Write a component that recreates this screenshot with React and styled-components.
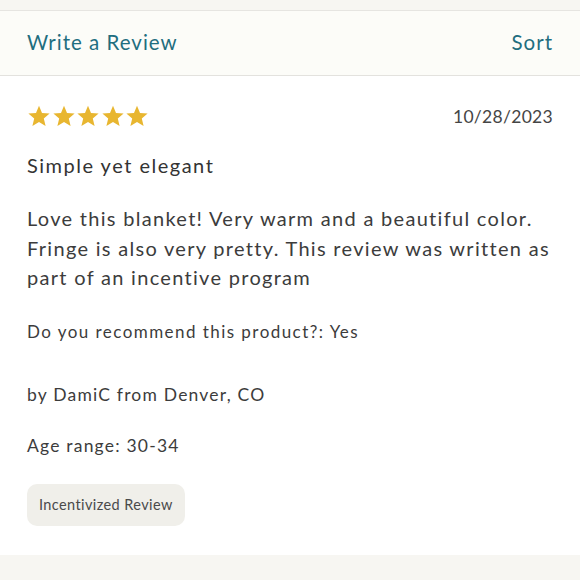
import styled, { createGlobalStyle } from 'styled-components';

const GlobalStyle = createGlobalStyle`
  html, body {
    margin: 0;
    padding: 0;
    background: #ffffff;
    font-family: Lato, "Noto Sans", sans-serif;
    color: #3a3a3a;
  }
`;

export default function App() {
  return (
    <>
      <GlobalStyle />
      <Page>
        <TopBand />
        <Header>
          <HeaderLink>Write a Review</HeaderLink>
          <HeaderLink>Sort</HeaderLink>
        </Header>
        <Review>
          <MetaRow>
            <Stars>
              {[0, 1, 2, 3, 4].map((i) => (
                <Star key={i} viewBox="0 0 24 24">
                  <path d="M12 1.8l3 7.1 7.6.6-5.8 5 1.8 7.5L12 18l-6.6 4 1.8-7.5-5.8-5 7.6-.6z" />
                </Star>
              ))}
            </Stars>
            <DateText>10/28/2023</DateText>
          </MetaRow>
          <Title>Simple yet elegant</Title>
          <Body>
            Love this blanket! Very warm and a beautiful color. Fringe is also
            very pretty. This review was written as part of an incentive
            program
          </Body>
          <Recommend>Do you recommend this product?: Yes</Recommend>
          <Author>by DamiC from Denver, CO</Author>
          <Age>Age range: 30-34</Age>
          <Badge>Incentivized Review</Badge>
        </Review>
        <BottomBand />
      </Page>
    </>
  );
}

const Page = styled.div`
  width: 580px;
  height: 580px;
  display: flex;
  flex-direction: column;
  overflow: hidden;
`;

const TopBand = styled.div`
  height: 10px;
  background: #f7f6f2;
  border-bottom: 1px solid #e6e5e1;
`;

const Header = styled.div`
  height: 64px;
  display: flex;
  align-items: center;
  justify-content: space-between;
  padding: 0 27px;
  background: #fcfcf8;
  border-bottom: 1px solid #e3e2de;
`;

const HeaderLink = styled.span`
  font-size: 20.5px;
  letter-spacing: 1px;
  color: #1f6e7f;
  padding-bottom: 2px;
`;

const Review = styled.div`
  flex: 1;
  display: flex;
  flex-direction: column;
  align-items: flex-start;
  padding: 26px 27px 0;
`;

const MetaRow = styled.div`
  align-self: stretch;
  display: flex;
  align-items: center;
  justify-content: space-between;
  height: 28px;
`;

const Stars = styled.div`
  display: flex;
  gap: 0.5px;
`;

const Star = styled.svg`
  width: 24px;
  height: 24px;
  fill: #e8b630;
`;

const DateText = styled.span`
  font-size: 17.5px;
  letter-spacing: 0.3px;
  color: #454545;
`;

const Title = styled.div`
  margin-top: 23px;
  font-size: 20px;
  letter-spacing: 1.5px;
  color: #333333;
`;

const Body = styled.p`
  margin: 27px -10px 0 0;
  font-size: 20px;
  line-height: 29.5px;
  letter-spacing: 1.3px;
  color: #3c3c3c;
`;

const Recommend = styled.div`
  margin-top: 28px;
  font-size: 17px;
  letter-spacing: 1.45px;
  color: #3c3c3c;
`;

const Author = styled.div`
  margin-top: 42px;
  font-size: 17.5px;
  letter-spacing: 1.2px;
  color: #3c3c3c;
`;

const Age = styled.div`
  margin-top: 30px;
  font-size: 17.5px;
  letter-spacing: 1.2px;
  color: #3c3c3c;
`;

const Badge = styled.div`
  margin-top: 28px;
  height: 42px;
  display: flex;
  align-items: center;
  padding: 0 12px;
  border-radius: 10px;
  background: #f0efea;
  font-size: 14.5px;
  letter-spacing: 0.4px;
  color: #4a4a4a;
`;

const BottomBand = styled.div`
  height: 25px;
  background: #f7f6f2;
`;
